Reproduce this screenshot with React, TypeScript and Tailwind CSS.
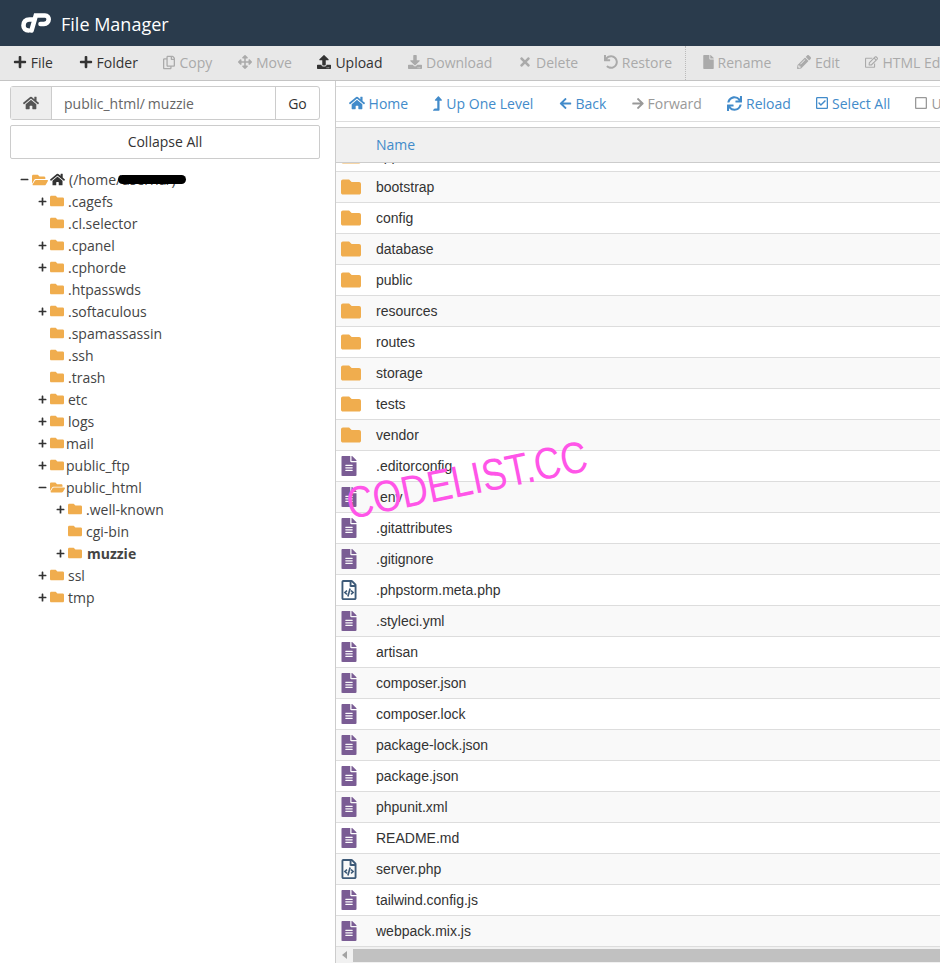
import type { ReactNode } from "react";
import {
  FaArrowLeft,
  FaArrowRight,
  FaArrowsAlt,
  FaDownload,
  FaFile,
  FaFileAlt,
  FaFolder,
  FaFolderOpen,
  FaHome,
  FaLevelUpAlt,
  FaMinus,
  FaPencilAlt,
  FaPlus,
  FaRegCheckSquare,
  FaRegCopy,
  FaRegEdit,
  FaRegFileCode,
  FaRegSquare,
  FaSync,
  FaTimes,
  FaUndo,
  FaUpload,
} from "react-icons/fa";

function ToolButton({ icon, label, off }: { icon: ReactNode; label: string; off?: boolean }) {
  return (
    <div className={`flex items-center gap-[4px] px-[12.8px] shrink-0 ${off ? "text-[#aaaaaa]" : "text-[#333333]"}`}>
      {icon}
      <span>{label}</span>
    </div>
  );
}

function NavButton({ icon, label, off }: { icon: ReactNode; label: string; off?: boolean }) {
  return (
    <div className={`flex items-center gap-[4px] px-[12.6px] shrink-0 ${off ? "text-[#999999]" : "text-[#428bca]"}`}>
      {icon}
      <span>{label}</span>
    </div>
  );
}

type TreeItem = {
  name: string;
  depth: number;
  toggle?: "plus" | "minus";
  open?: boolean;
  tight?: boolean;
  bold?: boolean;
};

const treeItems: TreeItem[] = [
  { name: ".cagefs", depth: 1, toggle: "plus" },
  { name: ".cl.selector", depth: 1 },
  { name: ".cpanel", depth: 1, toggle: "plus" },
  { name: ".cphorde", depth: 1, toggle: "plus" },
  { name: ".htpasswds", depth: 1 },
  { name: ".softaculous", depth: 1, toggle: "plus" },
  { name: ".spamassassin", depth: 1 },
  { name: ".ssh", depth: 1 },
  { name: ".trash", depth: 1 },
  { name: "etc", depth: 1, toggle: "plus" },
  { name: "logs", depth: 1, toggle: "plus" },
  { name: "mail", depth: 1, toggle: "plus", tight: true },
  { name: "public_ftp", depth: 1, toggle: "plus", tight: true },
  { name: "public_html", depth: 1, toggle: "minus", open: true, tight: true },
  { name: ".well-known", depth: 2, toggle: "plus" },
  { name: "cgi-bin", depth: 2 },
  { name: "muzzie", depth: 2, toggle: "plus", bold: true },
  { name: "ssl", depth: 1, toggle: "plus" },
  { name: "tmp", depth: 1, toggle: "plus" },
];

function TreeRow({ item }: { item: TreeItem }) {
  let gap = "ml-[4px]";
  if (item.tight) gap = item.open ? "ml-[1px]" : "ml-[2px]";
  if (item.bold) gap = "ml-[5px] font-bold";
  return (
    <div className={`flex h-[22px] items-center ${item.depth === 2 ? "pl-[46px]" : "pl-[28px]"}`}>
      <span className="flex w-[12px] shrink-0 items-center text-[#333333]">
        {item.toggle === "plus" && <FaPlus className="size-[9px]" />}
        {item.toggle === "minus" && <FaMinus className="size-[9px]" />}
      </span>
      {item.open ? (
        <FaFolderOpen className="size-[15px] shrink-0 text-[#f0ad4e]" />
      ) : (
        <FaFolder className="size-[14px] shrink-0 text-[#f0ad4e]" />
      )}
      <span className={gap}>{item.name}</span>
    </div>
  );
}

type FileKind = "folder" | "text" | "code";

const files: { name: string; kind: FileKind }[] = [
  { name: "app", kind: "folder" },
  { name: "bootstrap", kind: "folder" },
  { name: "config", kind: "folder" },
  { name: "database", kind: "folder" },
  { name: "public", kind: "folder" },
  { name: "resources", kind: "folder" },
  { name: "routes", kind: "folder" },
  { name: "storage", kind: "folder" },
  { name: "tests", kind: "folder" },
  { name: "vendor", kind: "folder" },
  { name: ".editorconfig", kind: "text" },
  { name: ".env", kind: "text" },
  { name: ".gitattributes", kind: "text" },
  { name: ".gitignore", kind: "text" },
  { name: ".phpstorm.meta.php", kind: "code" },
  { name: ".styleci.yml", kind: "text" },
  { name: "artisan", kind: "text" },
  { name: "composer.json", kind: "text" },
  { name: "composer.lock", kind: "text" },
  { name: "package-lock.json", kind: "text" },
  { name: "package.json", kind: "text" },
  { name: "phpunit.xml", kind: "text" },
  { name: "README.md", kind: "text" },
  { name: "server.php", kind: "code" },
  { name: "tailwind.config.js", kind: "text" },
  { name: "webpack.mix.js", kind: "text" },
];

function FileIcon({ kind }: { kind: FileKind }) {
  if (kind === "folder") return <FaFolder className="ml-[5px] size-[20px] text-[#f0ad4e]" />;
  if (kind === "code") return <FaRegFileCode className="ml-[5px] h-[20px] w-[16px] text-[#3d5a78]" />;
  return <FaFileAlt className="ml-[5px] h-[20px] w-[16px] text-[#7a5c94]" />;
}

export default function App() {
  return (
    <div className="flex h-[963px] w-[940px] flex-col overflow-hidden bg-white font-['Open_Sans',sans-serif] text-[14px] text-[#444444]">
      <header className="flex h-[46px] shrink-0 items-center bg-[#2a3b4c] pl-[21px] pt-[2px] text-white">
        <svg viewBox="0 0 30 20" className="-mt-[2px] h-[20px] w-[30px]" fill="none" stroke="currentColor" strokeWidth="4.600" strokeLinecap="round">
          <path d="M12 6.500H8.500C4.500 6.500 2.500 9 2.500 12.500C2.500 15.500 4.500 17.500 7.500 17.500" />
          <path d="M10.500 17.500L14.800 2.500H24C26.500 2.500 27.700 4.300 27.700 6.300C27.700 9 25.500 11 23 11H19.500" />
        </svg>
        <span className="ml-[10px] text-[18px]">File Manager</span>
      </header>

      <div className="flex h-[35px] shrink-0 items-center overflow-hidden border-b border-[#c4c4c4] bg-[#e8e8e8] pb-[2px]">
        <ToolButton icon={<FaPlus className="size-[14px]" />} label="File" />
        <ToolButton icon={<FaPlus className="size-[14px]" />} label="Folder" />
        <ToolButton off icon={<FaRegCopy className="h-[15px] w-[12px]" />} label="Copy" />
        <ToolButton off icon={<FaArrowsAlt className="size-[14px]" />} label="Move" />
        <ToolButton icon={<FaUpload className="size-[14px]" />} label="Upload" />
        <ToolButton off icon={<FaDownload className="size-[14px]" />} label="Download" />
        <ToolButton off icon={<FaTimes className="size-[14px]" />} label="Delete" />
        <ToolButton off icon={<FaUndo className="size-[14px]" />} label="Restore" />
        <div className="-mb-[2px] mr-[4px] h-[34px] border-l border-dotted border-[#bbbbbb]" />
        <ToolButton off icon={<FaFile className="h-[14px] w-[11px]" />} label="Rename" />
        <ToolButton off icon={<FaPencilAlt className="size-[14px]" />} label="Edit" />
        <ToolButton off icon={<FaRegEdit className="h-[14px] w-[13px]" />} label="HTML Editor" />
      </div>

      <main className="flex min-h-0 flex-1">
        <aside className="w-[335px] shrink-0 px-[10px] pt-[5px]">
          <div className="flex h-[34px] w-[310px] rounded-[3px] border border-[#cccccc]">
            <div className="flex w-[41px] items-center justify-center border-r border-[#cccccc] bg-[#eeeeee] text-[#555555]">
              <FaHome className="size-[16px]" />
            </div>
            <div className="flex flex-1 items-center pl-[12px] text-[#666666]">
              public_html/<span className="ml-[3px]">muzzie</span>
            </div>
            <div className="flex w-[44px] items-center justify-center border-l border-[#cccccc] text-[#333333]">Go</div>
          </div>
          <div className="mt-[5px] flex h-[34px] w-[310px] items-center justify-center rounded-[2px] border border-[#cccccc] pb-[2px] text-[#333333]">
            Collapse All
          </div>

          <div className="pt-[9px]">
            <div className="flex h-[22px] items-center pl-[10px] pt-[1px]">
              <FaMinus className="mr-[3px] size-[9px] text-[#333333]" />
              <FaFolderOpen className="size-[16px] text-[#f0ad4e]" />
              <FaHome className="ml-[2px] size-[15px] text-[#333333]" />
              <span className="relative ml-[4px]">
                (/home/userna/)
                <span className="absolute left-[49px] top-[6px] h-[9px] w-[68px] rounded-full bg-black" />
              </span>
            </div>
            {treeItems.map((item) => (
              <TreeRow key={item.name} item={item} />
            ))}
          </div>
        </aside>

        <section className="relative flex min-w-0 flex-1 flex-col border-l border-[#cccccc] pt-[5px]">
          <div className="flex h-[36px] shrink-0 items-center overflow-hidden border-y border-[#dddddd] pb-[2px]">
            <NavButton icon={<FaHome className="size-[16px]" />} label="Home" />
            <NavButton icon={<FaLevelUpAlt className="h-[15px] w-[9px]" />} label="Up One Level" />
            <NavButton icon={<FaArrowLeft className="size-[13px]" />} label="Back" />
            <NavButton off icon={<FaArrowRight className="h-[13px] w-[12px]" />} label="Forward" />
            <NavButton icon={<FaSync className="size-[15px]" />} label="Reload" />
            <NavButton icon={<FaRegCheckSquare className="h-[14px] w-[12px]" />} label="Select All" />
            <NavButton off icon={<FaRegSquare className="h-[14px] w-[12px]" />} label="Unselect All" />
          </div>

          <div className="mt-[5px] flex h-[36px] shrink-0 items-center border-y border-[#cccccc] bg-[#f0f0f0] pb-[2px] pl-[40px] text-[#428bca]">
            Name
          </div>

          <div className="min-h-0 flex-1 overflow-hidden font-['Liberation_Sans',sans-serif] text-[#333333]">
            <div className="-mt-[22px]">
              {files.map((file, i) => (
                <div
                  key={file.name}
                  className={`flex h-[31px] items-center border-b border-[#dddddd] ${i % 2 === 1 ? "bg-[#f9f9f9]" : "bg-white"}`}
                >
                  <span className="flex w-[40px] shrink-0 items-center">
                    <FileIcon kind={file.kind} />
                  </span>
                  {file.name}
                </div>
              ))}
            </div>
          </div>

          <div className="flex h-[16px] shrink-0 items-center bg-[#f1f1f1]">
            <span className="ml-[6px] h-0 w-0 border-y-[4px] border-r-[5px] border-y-transparent border-r-[#a3a3a3]" />
            <span className="ml-[6px] h-[13px] flex-1 bg-[#c1c1c1]" />
          </div>

          <div className="pointer-events-none absolute left-[11px] top-[396px] origin-left -rotate-[11.500deg] scale-y-[1.2] whitespace-nowrap font-['Liberation_Sans',sans-serif] text-[37px] text-[#ff55e8]">
            CODELIST.CC
          </div>
        </section>
      </main>
    </div>
  );
}
